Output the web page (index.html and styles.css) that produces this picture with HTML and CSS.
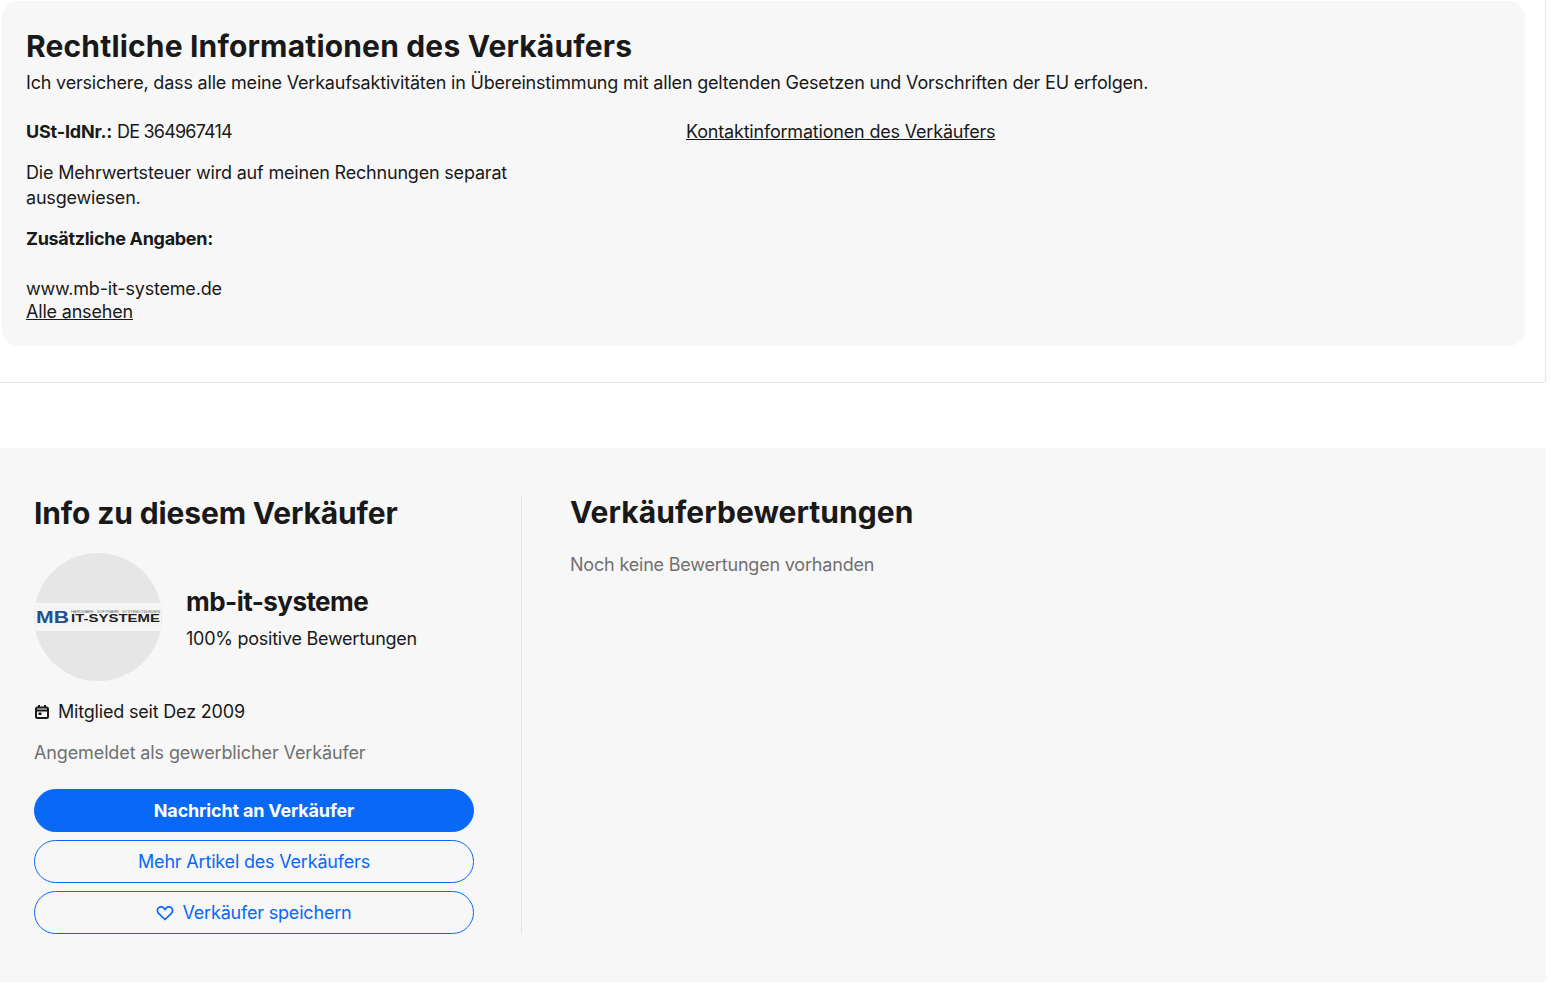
FILE: index.html
```html
<!DOCTYPE html>
<html lang="de">
<head>
    <meta charset="UTF-8">
    <meta name="viewport" content="width=device-width, initial-scale=1.0">
    <title>Info zu diesem Verkäufer</title>
    <link rel="stylesheet" href="styles.css">
</head>
<body>
    <div class="legal-wrap">
        <section class="legal-card">
            <h2 class="legal-title">Rechtliche Informationen des Verkäufers</h2>
            <p class="legal-lead">Ich versichere, dass alle meine Verkaufsaktivitäten in Übereinstimmung mit allen geltenden Gesetzen und Vorschriften der EU erfolgen.</p>
            <div class="legal-columns">
                <div class="legal-main">
                    <p class="legal-row"><strong>USt-IdNr.:</strong> <span class="legal-vat">DE 364967414</span></p>
                    <p class="legal-row">Die Mehrwertsteuer wird auf meinen Rechnungen separat ausgewiesen.</p>
                    <p class="legal-row"><strong class="legal-label">Zusätzliche Angaben:</strong></p>
                    <p class="legal-extra">www.mb-it-systeme.de</p>
                    <a class="legal-link" href="#">Alle ansehen</a>
                </div>
                <div class="legal-side">
                    <a class="legal-link" href="#">Kontaktinformationen des Verkäufers</a>
                </div>
            </div>
        </section>
    </div>

    <section class="seller">
        <div class="seller-info">
            <h2 class="seller-heading">Info zu diesem Verkäufer</h2>
            <div class="seller-profile">
                <div class="avatar">
                    <svg class="avatar-logo" viewBox="0 0 126 28" width="126" height="28">
                        <rect width="126" height="28" fill="#f5f5f5"/>
                        <text class="logo-mb" x="1" y="20" textLength="33" lengthAdjust="spacingAndGlyphs">MB</text>
                        <text class="logo-small" x="36" y="10" textLength="89" lengthAdjust="spacingAndGlyphs">HARDWARE · SOFTWARE · SYSTEMLÖSUNGEN</text>
                        <text class="logo-name" x="36" y="19" textLength="89" lengthAdjust="spacingAndGlyphs">IT-SYSTEME</text>
                    </svg>
                </div>
                <div class="seller-summary">
                    <div class="seller-name">mb-it-systeme</div>
                    <div class="seller-score">100% positive Bewertungen</div>
                </div>
            </div>
            <div class="seller-since">
                <svg class="icon-calendar" viewBox="0 0 16 16" width="16" height="16" fill="none" stroke="#191919" stroke-width="2">
                    <rect x="2" y="3.500" width="12" height="10.500" rx="1.500"/>
                    <path d="M2 6.500h12M5 1v3M11 1v3"/>
                    <rect x="4.500" y="8.500" width="3" height="2.500" fill="#191919" stroke="none"/>
                </svg>
                <span>Mitglied seit Dez 2009</span>
            </div>
            <p class="seller-type">Angemeldet als gewerblicher Verkäufer</p>
            <div class="seller-actions">
                <a class="btn btn-primary" href="#">Nachricht an Verkäufer</a>
                <a class="btn" href="#">Mehr Artikel des Verkäufers</a>
                <a class="btn" href="#">
                    <svg class="icon-heart" viewBox="0 0 18 16" width="18" height="16" fill="none" stroke="#0968f6" stroke-width="1.700" stroke-linejoin="round">
                        <path d="M9 14.500 2.600 8.300C.9 6.600 1 4 2.700 2.600 4.400 1.300 6.800 1.600 8 3.200L9 4.500l1-1.300c1.200-1.600 3.600-1.900 5.300-.6C17 4 17.100 6.600 15.400 8.300z"/>
                    </svg>
                    Verkäufer speichern
                </a>
            </div>
        </div>
        <div class="seller-reviews">
            <h2 class="seller-heading reviews-heading">Verkäuferbewertungen</h2>
            <p class="reviews-empty">Noch keine Bewertungen vorhanden</p>
        </div>
    </section>
</body>
</html>
```

FILE: styles.css
```css
body {
    margin: 0;
    font-family: Inter, "Noto Sans", sans-serif;
    font-size: 18px;
    line-height: 25px;
    letter-spacing: -0.19px;
    color: #191919;
    background-color: #fff;
}
p {
    margin: 0;
}
h2 {
    margin: 0;
}
.legal-wrap {
    width: 1546px;
    height: 383px;
    padding: 1px 0 0 2px;
    box-sizing: border-box;
    border-right: 1px solid #e5e5e5;
    border-bottom: 1px solid #e5e5e5;
    border-bottom-right-radius: 4px;
}
.legal-card {
    width: 1523px;
    height: 345px;
    box-sizing: border-box;
    padding: 26px 24px 0;
    background-color: #f7f7f7;
    border-radius: 16px;
}
.legal-title {
    font-size: 30px;
    line-height: 38px;
    font-weight: 700;
    letter-spacing: 0.17px;
}
.legal-lead {
    margin-top: 5px;
}
.legal-columns {
    display: flex;
    margin-top: 24px;
}
.legal-main {
    width: 660px;
    padding-right: 150px;
    box-sizing: border-box;
}
.legal-side {
    padding-top: 1px;
}
.legal-row {
    margin-bottom: 16px;
}
.legal-vat {
    letter-spacing: -0.8px;
}
.legal-label {
    letter-spacing: -0.3px;
}
.legal-extra {
    margin-top: 26px;
    line-height: 23px;
}
.legal-link {
    display: block;
    line-height: 23px;
    color: #191919;
    text-decoration: underline;
}
.seller {
    display: flex;
    width: 1546px;
    height: 534px;
    margin-top: 65px;
    padding: 48px 0 0 34px;
    box-sizing: border-box;
    background-color: #f7f7f7;
}
.seller-info {
    width: 488px;
    height: 438px;
    padding-right: 47px;
    box-sizing: border-box;
    border-right: 1px solid #e5e5e5;
}
.seller-reviews {
    padding-left: 48px;
}
.seller-heading {
    font-size: 30px;
    line-height: 34px;
    font-weight: 700;
    letter-spacing: -0.14px;
}
.reviews-heading {
    margin-top: -1px;
    letter-spacing: 0.05px;
}
.seller-profile {
    display: flex;
    align-items: center;
    gap: 24px;
    margin-top: 23px;
}
.avatar {
    display: flex;
    align-items: center;
    justify-content: center;
    width: 128px;
    height: 128px;
    border-radius: 50%;
    background-color: #e6e6e6;
    overflow: hidden;
}
.avatar-logo {
    display: block;
}
.logo-mb {
    font-family: "Liberation Sans", sans-serif;
    font-size: 17px;
    font-weight: 700;
    letter-spacing: 0;
    fill: #23508f;
}
.logo-small {
    font-family: "Liberation Sans", sans-serif;
    font-size: 3px;
    letter-spacing: 0;
    fill: #666;
}
.logo-name {
    font-family: "Liberation Sans", sans-serif;
    font-size: 11px;
    font-weight: 700;
    letter-spacing: 0;
    fill: #222;
}
.seller-summary {
    margin-top: 3px;
}
.seller-name {
    font-size: 26px;
    line-height: 32px;
    font-weight: 700;
    letter-spacing: -0.55px;
}
.seller-score {
    margin-top: 8px;
    letter-spacing: -0.25px;
}
.seller-since {
    display: flex;
    align-items: center;
    gap: 8px;
    margin-top: 18px;
}
.seller-type {
    margin-top: 16px;
    color: #707070;
    letter-spacing: -0.12px;
}
.seller-actions {
    display: flex;
    flex-direction: column;
    gap: 8px;
    margin-top: 24px;
}
.btn {
    display: flex;
    align-items: center;
    justify-content: center;
    gap: 8px;
    height: 43px;
    box-sizing: border-box;
    border: 1px solid #0968f6;
    border-radius: 22px;
    color: #0968f6;
    text-decoration: none;
}
.btn-primary {
    background-color: #0968f6;
    color: #fff;
    font-weight: 700;
}
.reviews-empty {
    margin-top: 23px;
    color: #707070;
}
```
